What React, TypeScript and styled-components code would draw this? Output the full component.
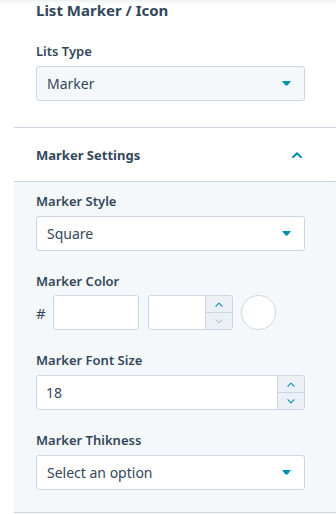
import React from "react";
import styled, { createGlobalStyle } from "styled-components";

const GlobalStyle = createGlobalStyle`
  body {
    margin: 0;
    background: #ffffff;
    font-family: "Noto Sans", "Open Sans", sans-serif;
    color: #33475b;
  }
`;

const Page = styled.div`
  width: 336px;
  height: 514px;
  overflow: hidden;
  padding-left: 14px;
  box-sizing: border-box;
  background: #ffffff;
  box-shadow: inset 0 4px 4px -3px rgba(45, 62, 80, 0.12);
`;

const TopSection = styled.div`
  padding: 0 31px 26px 22px;
`;

const Title = styled.h2`
  margin: 0 0 21px;
  font-size: 15px;
  line-height: 20px;
  font-weight: 700;
`;

const Field = styled.div`
  display: flex;
  flex-direction: column;
`;

const Label = styled.label`
  font-size: 13px;
  line-height: 20px;
  font-weight: 600;
  margin-bottom: 5px;
`;

const SelectBox = styled.div<{ $muted?: boolean }>`
  height: 35px;
  box-sizing: border-box;
  border: 1px solid #cbd6e2;
  border-radius: 3px;
  background: ${(p) => (p.$muted ? "#f5f8fa" : "#ffffff")};
  display: flex;
  align-items: center;
  justify-content: space-between;
  padding: 0 13px 0 10px;
  font-size: 14px;
`;

const Accordion = styled.section`
  border-top: 1px solid #cbd6e2;
  border-bottom: 1px solid #cbd6e2;
`;

const AccordionHeader = styled.div`
  height: 53px;
  display: flex;
  align-items: center;
  justify-content: space-between;
  padding: 0 34px 0 22px;
  border-bottom: 1px solid #cbd6e2;
  font-size: 13px;
  font-weight: 700;
`;

const Panel = styled.div`
  background: #f5f8fa;
  padding: 9px 31px 22px 22px;
  display: flex;
  flex-direction: column;
  gap: 20px;
`;

const ColorRow = styled.div`
  display: flex;
  align-items: center;
  margin-top: -1px;
`;

const Hash = styled.span`
  font-size: 15px;
  width: 17px;
`;

const TextInput = styled.div<{ $width: number }>`
  width: ${(p) => p.$width}px;
  height: 35px;
  box-sizing: border-box;
  border: 1px solid #cbd6e2;
  border-radius: 3px;
  background: #ffffff;
`;

const NumberInput = styled.div<{ $width?: number }>`
  width: ${(p) => (p.$width ? `${p.$width}px` : "auto")};
  margin-left: ${(p) => (p.$width ? "9px" : "0")};
  height: 35px;
  box-sizing: border-box;
  border: 1px solid #cbd6e2;
  border-radius: 3px;
  background: #ffffff;
  display: flex;
  overflow: hidden;
`;

const NumberValue = styled.div`
  flex: 1;
  display: flex;
  align-items: center;
  padding-left: 9px;
  font-size: 14px;
`;

const Spinner = styled.div`
  width: 26px;
  display: flex;
  flex-direction: column;
  border-left: 1px solid #cbd6e2;
  background: #eaf0f6;
`;

const SpinButton = styled.div`
  flex: 1;
  display: flex;
  align-items: center;
  justify-content: center;
  & + & {
    border-top: 1px solid #cbd6e2;
  }
`;

const Swatch = styled.div`
  width: 35px;
  height: 35px;
  margin-left: 8px;
  box-sizing: border-box;
  border-radius: 50%;
  border: 1px solid #cbd6e2;
  background: #ffffff;
`;

const Caret = () => (
  <svg width="9" height="5" viewBox="0 0 9 5">
    <polygon points="0,0 9,0 5.5,4.6 3.5,4.6" fill="#0091ae" />
  </svg>
);

const Chevron = ({ up = true, size = 10, color = "#0091ae", width = 2 }) => (
  <svg width={size} height={size / 2 + 1} viewBox="0 0 10 6">
    <path
      d={up ? "M1 5.2 L5 1.2 L9 5.2" : "M1 0.8 L5 4.8 L9 0.8"}
      fill="none"
      stroke={color}
      strokeWidth={width}
      strokeLinecap="round"
      strokeLinejoin="round"
    />
  </svg>
);

const Select = ({ value, muted }: { value: string; muted?: boolean }) => (
  <SelectBox $muted={muted}>
    <span>{value}</span>
    <Caret />
  </SelectBox>
);

const Stepper = ({ value, width, downOff }: { value: string; width?: number; downOff?: boolean }) => (
  <NumberInput $width={width}>
    <NumberValue>{value}</NumberValue>
    <Spinner>
      <SpinButton>
        <Chevron size={8} width={1.3} />
      </SpinButton>
      <SpinButton>
        <Chevron up={false} size={8} width={1.3} color={downOff ? "#b0c1d4" : "#0091ae"} />
      </SpinButton>
    </Spinner>
  </NumberInput>
);

export default function App() {
  return (
    <>
      <GlobalStyle />
      <Page>
        <TopSection>
          <Title>List Marker / Icon</Title>
          <Field>
            <Label>Lits Type</Label>
            <Select value="Marker" muted />
          </Field>
        </TopSection>
        <Accordion>
          <AccordionHeader>
            <span>Marker Settings</span>
            <Chevron />
          </AccordionHeader>
          <Panel>
            <Field>
              <Label>Marker Style</Label>
              <Select value="Square" />
            </Field>
            <Field>
              <Label>Marker Color</Label>
              <ColorRow>
                <Hash>#</Hash>
                <TextInput $width={86} />
                <Stepper value="" width={85} downOff />
                <Swatch />
              </ColorRow>
            </Field>
            <Field>
              <Label>Marker Font Size</Label>
              <Stepper value="18" />
            </Field>
            <Field>
              <Label>Marker Thikness</Label>
              <Select value="Select an option" />
            </Field>
          </Panel>
        </Accordion>
      </Page>
    </>
  );
}
